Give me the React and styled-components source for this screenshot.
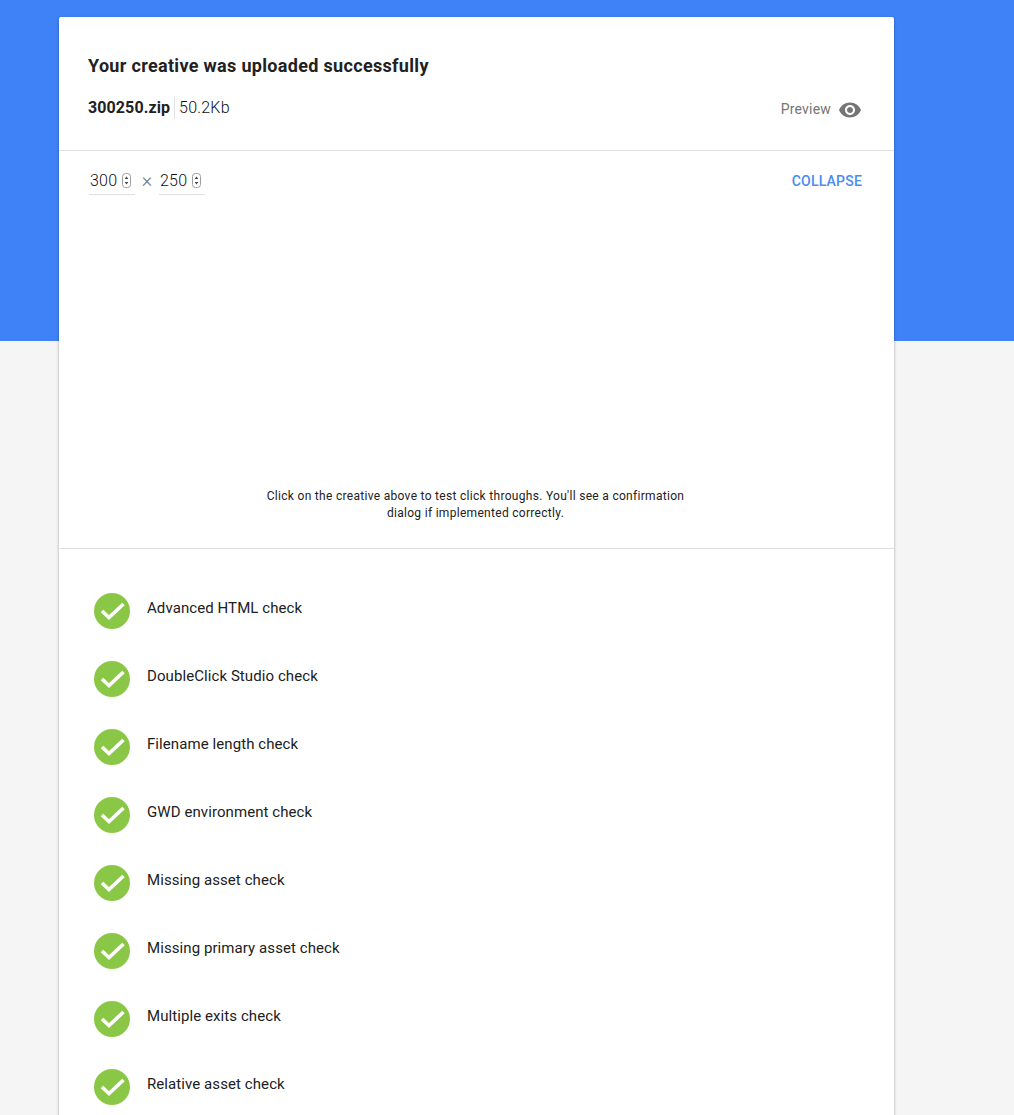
import styled, { createGlobalStyle } from "styled-components"
import { MdVisibility } from "react-icons/md"

const GlobalStyle = createGlobalStyle`
html, body {
  margin: 0;
  padding: 0;
}
body {
  font-family: Roboto, "Liberation Sans", sans-serif;
  color: #212121;
}
`

const Page = styled.div`
height: 1115px;
overflow: hidden;
box-sizing: border-box;
padding: 17px 120px 0 59px;
background: linear-gradient(#3f82f7 0, #3f82f7 341px, #f5f5f5 341px);
`
const Card = styled.div`
background: #fff;
border-radius: 2px 2px 0 0;
box-shadow: 0 1px 3px rgba(0, 0, 0, 0.35);
min-height: 1200px;
`
const Header = styled.div`
height: 134px;
box-sizing: border-box;
padding: 37px 32px 0 29px;
border-bottom: 1px solid #e0e0e0;
`
const Title = styled.h1`
margin: 0;
font-size: 18px;
line-height: 24px;
font-weight: 700;
letter-spacing: 0.32px;
`
const FileRow = styled.div`
display: flex;
align-items: center;
margin-top: 15px;
`
const FileName = styled.span`
font-size: 16px;
line-height: 22px;
font-weight: 700;
letter-spacing: 0.1px;
padding-right: 4px;
border-right: 1px solid #e0e0e0;
`
const FileSize = styled.span`
font-size: 16px;
font-weight: 300;
letter-spacing: 0.2px;
padding-left: 4px;
color: #111;
`
const Preview = styled.div`
display: flex;
align-items: center;
gap: 7px;
margin-left: auto;
margin-top: 3px;
color: #757575;
font-size: 14px;
letter-spacing: 0.2px;
`
const Eye = styled(MdVisibility)`
margin-top: 2px;
color: #757575;
`
const Creative = styled.div`
height: 398px;
box-sizing: border-box;
border-bottom: 1px solid #e0e0e0;
display: flex;
flex-direction: column;
padding: 17px 32px 0 30px;
`
const SizeRow = styled.div`
display: flex;
align-items: center;
`
const SizeField = styled.div`
display: flex;
align-items: center;
gap: 5px;
width: 46px;
height: 27px;
box-sizing: border-box;
padding: 0 0 1px 1px;
border-bottom: 1px solid #e0e0e0;
font-size: 16px;
font-weight: 300;
letter-spacing: 0.2px;
color: #111;
`
const Times = styled.span`
width: 24px;
margin-bottom: 4px;
text-align: center;
color: #757575;
font-size: 20px;
line-height: 20px;
font-weight: 300;
`
const Collapse = styled.button`
margin: 0 0 2px auto;
padding: 0;
border: 0;
background: none;
font-family: inherit;
font-size: 14px;
font-weight: 500;
letter-spacing: 0.2px;
color: #4a8cf0;
`
const Hint = styled.p`
width: 440px;
margin: 293px auto 0;
text-align: center;
font-size: 12px;
line-height: 17px;
letter-spacing: 0.3px;
color: #212121;
`
const Checks = styled.ul`
list-style: none;
margin: 0;
padding: 28px 0 0 35px;
`
const Check = styled.li`
display: flex;
align-items: center;
gap: 17px;
height: 68px;
font-size: 15px;
letter-spacing: 0.08px;
`
const CheckName = styled.span`
margin-bottom: 6px;
`

const Spinner = () => (
  <svg width="9" height="15" viewBox="0 0 9 15">
    <rect x="0.5" y="0.5" width="8" height="14" rx="3" fill="#fff" stroke="#9e9e9e" />
    <path d="M4.5 3.5 L6.3 6 H2.7 Z M4.5 11.5 L6.3 9 H2.7 Z" fill="#424242" />
  </svg>
)

const CheckIcon = () => (
  <svg width="36" height="36" viewBox="0 0 36 36">
    <circle cx="18" cy="18" r="18" fill="#8bc747" />
    <path d="M8 18 L15 24.5 L29.5 11" fill="none" stroke="#fff" strokeWidth="3.6" />
  </svg>
)

const checks = [
  "Advanced HTML check",
  "DoubleClick Studio check",
  "Filename length check",
  "GWD environment check",
  "Missing asset check",
  "Missing primary asset check",
  "Multiple exits check",
  "Relative asset check",
]

const App = () => {
  return (
    <Page>
      <GlobalStyle />
      <Card>
        <Header>
          <Title>Your creative was uploaded successfully</Title>
          <FileRow>
            <FileName>300250.zip</FileName>
            <FileSize>50.2Kb</FileSize>
            <Preview>
              Preview
              <Eye size={24} />
            </Preview>
          </FileRow>
        </Header>
        <Creative>
          <SizeRow>
            <SizeField>300 <Spinner /></SizeField>
            <Times>×</Times>
            <SizeField>250 <Spinner /></SizeField>
            <Collapse>COLLAPSE</Collapse>
          </SizeRow>
          <Hint>
            Click on the creative above to test click throughs. You'll see a confirmation
            dialog if implemented correctly.
          </Hint>
        </Creative>
        <Checks>
          {checks.map((name) => (
            <Check key={name}>
              <CheckIcon />
              <CheckName>{name}</CheckName>
            </Check>
          ))}
        </Checks>
      </Card>
    </Page>
  )
}

export default App
